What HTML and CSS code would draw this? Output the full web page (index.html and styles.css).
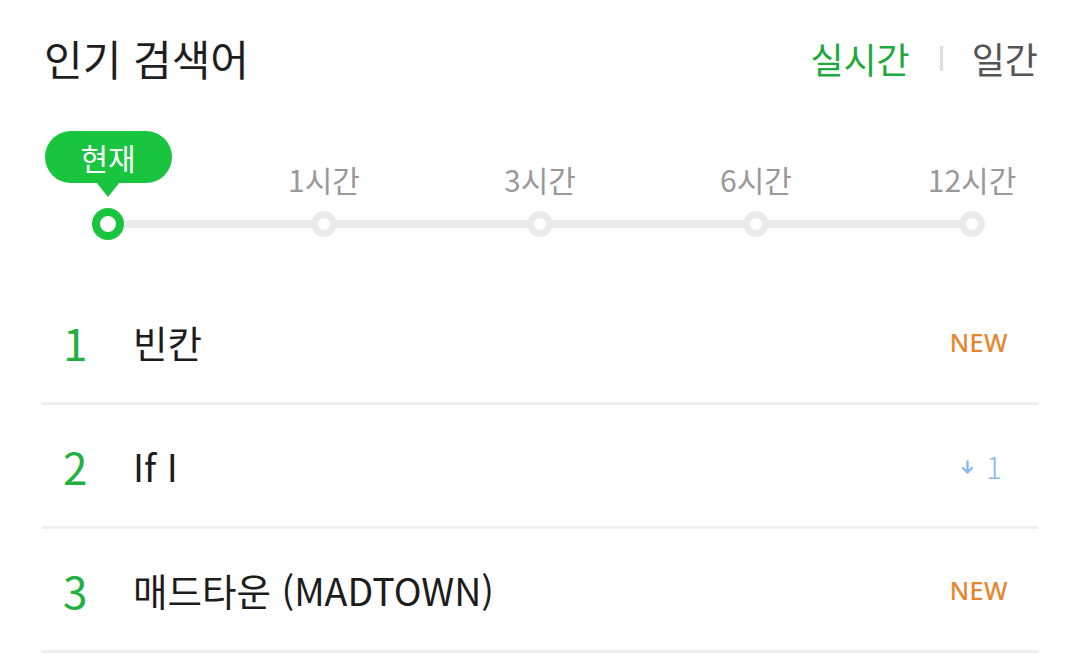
FILE: index.html
```html
<!DOCTYPE html>
<html lang="ko">
<head>
<meta charset="utf-8">
<title>인기 검색어</title>
<link rel="stylesheet" href="styles.css">
</head>
<body>
<div class="panel">
  <header class="header">
    <h1 class="title">인기 검색어</h1>
    <nav class="tabs">
      <span class="tab tab-active">실시간</span>
      <span class="sep"></span>
      <span class="tab">일간</span>
    </nav>
  </header>

  <section class="timeline">
    <div class="stops">
      <div class="stop">
        <div class="stop-label"><span class="badge">현재</span></div>
        <div class="stop-dot"><span class="dot dot-active"></span></div>
      </div>
      <div class="stop">
        <div class="stop-label"><span class="label">1시간</span></div>
        <div class="stop-dot"><span class="dot"></span></div>
      </div>
      <div class="stop">
        <div class="stop-label"><span class="label">3시간</span></div>
        <div class="stop-dot"><span class="dot"></span></div>
      </div>
      <div class="stop">
        <div class="stop-label"><span class="label">6시간</span></div>
        <div class="stop-dot"><span class="dot"></span></div>
      </div>
      <div class="stop">
        <div class="stop-label"><span class="label">12시간</span></div>
        <div class="stop-dot"><span class="dot"></span></div>
      </div>
    </div>
  </section>

  <ol class="list">
    <li class="row">
      <span class="rank">1</span>
      <span class="keyword">빈칸</span>
      <span class="change new">NEW</span>
    </li>
    <li class="row">
      <span class="rank">2</span>
      <span class="keyword">If I</span>
      <span class="change down">
        <svg class="arrow" width="13" height="16" viewBox="0 0 13 16"><path d="M6.5 2.5v11M2 9l4.5 4.5L11 9" fill="none" stroke="#8ab8ea" stroke-width="2.4" stroke-linecap="round" stroke-linejoin="round"/></svg>
        <span>1</span>
      </span>
    </li>
    <li class="row">
      <span class="rank">3</span>
      <span class="keyword">매드타운 (MADTOWN)</span>
      <span class="change new">NEW</span>
    </li>
  </ol>
</div>
</body>
</html>
```

FILE: styles.css
```css
html, body {
  margin: 0;
  padding: 0;
  background: #ffffff;
}

body {
  font-family: "Noto Sans CJK KR", "Noto Sans", sans-serif;
  color: #1c1c1c;
}

.panel {
  padding: 0 42px;
}

.header {
  display: flex;
  justify-content: space-between;
  align-items: center;
  height: 116px;
  padding-left: 2px;
}

.title {
  margin: 0;
  font-size: 42px;
  font-weight: 400;
  line-height: 1;
  color: #1e1e1e;
}

.tabs {
  display: flex;
  align-items: center;
  font-size: 36px;
  line-height: 1;
}

.tab {
  color: #555555;
}

.tab-active {
  color: #1fa83c;
}

.sep {
  width: 3px;
  height: 25px;
  background: #dddddd;
  margin: 0 29px 0 30px;
}

.timeline {
  padding: 15px 66px 0;
}

.stops {
  position: relative;
  display: flex;
  justify-content: space-between;
}

.stops::before {
  content: "";
  position: absolute;
  left: 0;
  right: 0;
  top: 89px;
  height: 8px;
  background: #ebebeb;
}

.stop {
  width: 0;
  display: flex;
  flex-direction: column;
  align-items: center;
  position: relative;
}

.stop-label {
  height: 77px;
  display: flex;
  align-items: flex-end;
  justify-content: center;
  white-space: nowrap;
}

.label {
  font-size: 30px;
  line-height: 1;
  color: #999999;
  padding-bottom: 14px;
}

.badge {
  align-self: flex-start;
  position: relative;
  width: 127px;
  height: 52px;
  border-radius: 26px;
  background: #19c43f;
  color: #ffffff;
  font-size: 30px;
  line-height: 52px;
  text-align: center;
}

.badge::after {
  content: "";
  position: absolute;
  left: 50%;
  top: 51px;
  margin-left: -12px;
  border-left: 12px solid transparent;
  border-right: 12px solid transparent;
  border-top: 15px solid #19c43f;
}

.stop-dot {
  height: 32px;
  display: flex;
  align-items: center;
  justify-content: center;
  position: relative;
}

.dot {
  box-sizing: border-box;
  width: 26px;
  height: 26px;
  border-radius: 50%;
  border: 7px solid #ebebeb;
  background: #ffffff;
  flex: none;
}

.dot-active {
  width: 32px;
  height: 32px;
  border: 8px solid #19c43f;
}

.list {
  list-style: none;
  margin: 41px 0 0;
  padding: 0;
}

.row {
  display: flex;
  align-items: center;
  height: 121px;
  border-bottom: 3px solid #efefef;
}

.rank {
  width: 70px;
  padding-left: 21px;
  font-size: 44px;
  line-height: 1;
  color: #22b03e;
}

.keyword {
  font-size: 37.5px;
  line-height: 1;
  color: #1c1c1c;
}

.change {
  margin-left: auto;
  display: flex;
  align-items: center;
}

.new {
  font-family: "Noto Sans", sans-serif;
  font-size: 25px;
  font-weight: 500;
  color: #e8852c;
  padding-right: 30px;
  letter-spacing: 0.5px;
}

.down {
  font-size: 30px;
  font-weight: 300;
  color: #8ab8ea;
  padding-right: 36px;
  gap: 12px;
}

.arrow {
  display: block;
  margin-top: 2px;
}
```
